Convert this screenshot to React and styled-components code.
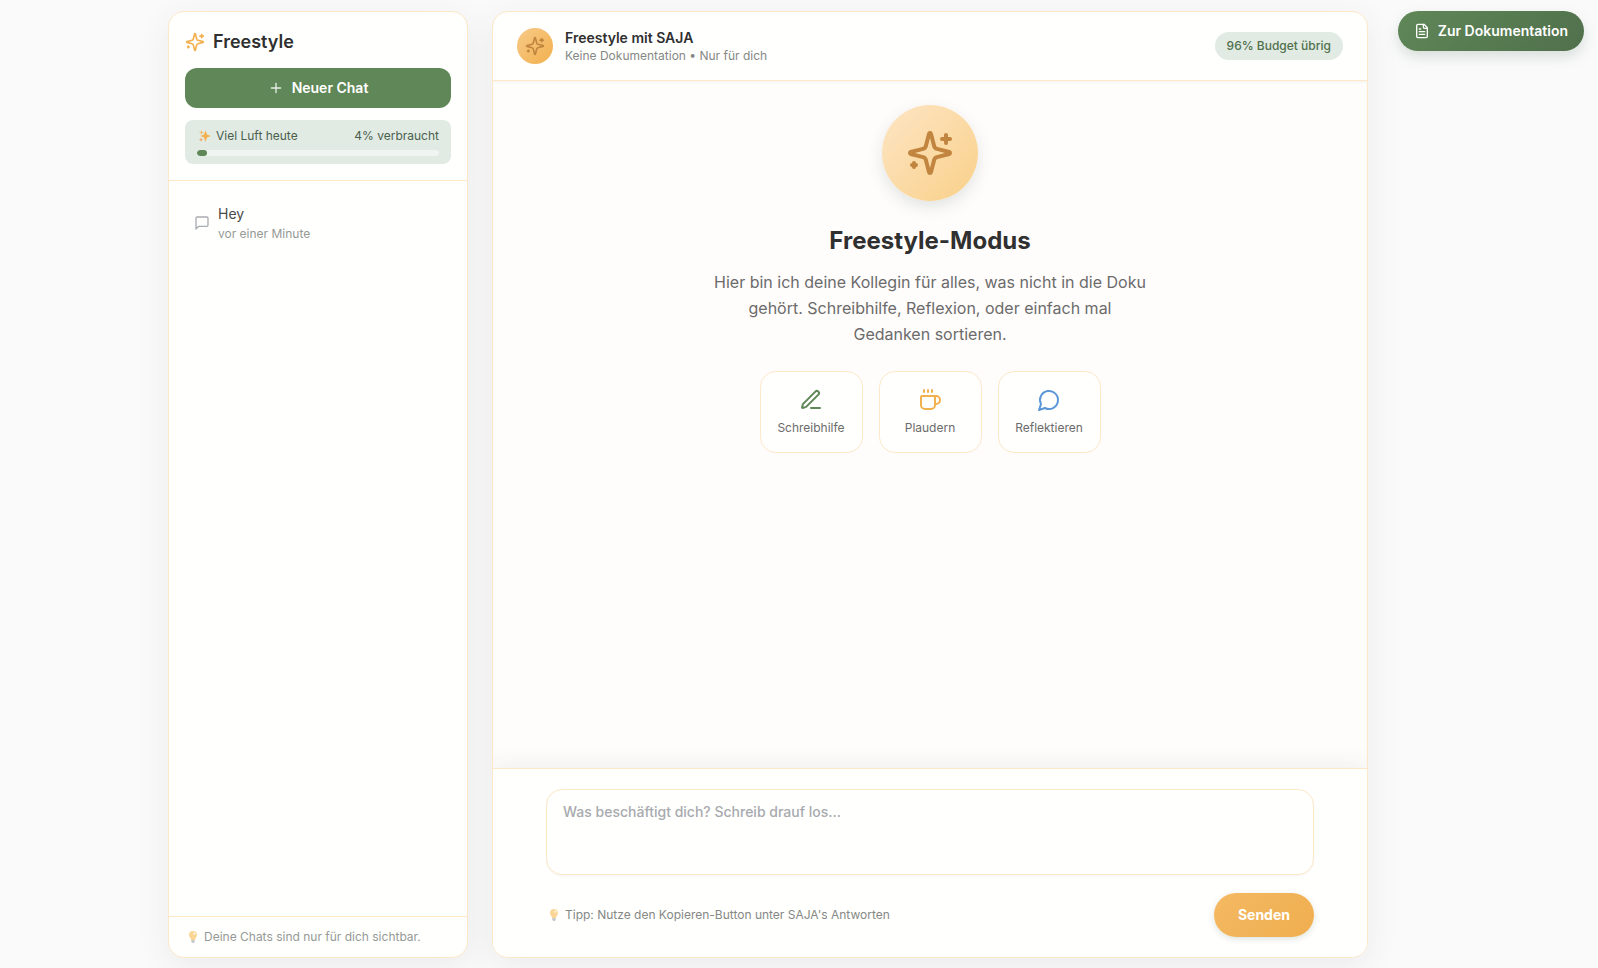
import React, { useState } from 'react';
import styled, { createGlobalStyle } from 'styled-components';
import { Coffee, Plus } from 'lucide-react';

const GlobalStyle = createGlobalStyle`
  *, *::before, *::after {
    box-sizing: border-box;
  }

  body {
    margin: 0;
    background: #fafafa;
    color: #303030;
    font-family: 'Inter', sans-serif;
    font-size: 14px;
    line-height: 20px;
  }

  button, textarea {
    font: inherit;
  }

  h1, h2, p {
    margin: 0;
  }
`;

const Page = styled.div`
  position: relative;
  display: flex;
  justify-content: center;
  height: 100vh;
  padding: 11px 62px 10px 0;
  overflow: hidden;
`;

const Layout = styled.div`
  display: grid;
  grid-template-columns: 300px minmax(0, 1fr);
  gap: 24px;
  width: 100%;
  max-width: 1200px;
`;

const Panel = styled.section`
  display: flex;
  flex-direction: column;
  min-height: 0;
  overflow: hidden;
  background: #fffffe;
  border: 1px solid #fde8c8;
  border-radius: 16px;
  box-shadow: 0 8px 32px rgba(45, 60, 50, 0.08);
`;

const SidebarHeader = styled.header`
  display: flex;
  flex-direction: column;
  gap: 12px;
  padding: 16px;
  border-bottom: 1px solid #fde8c8;
`;

const SidebarTitle = styled.h2`
  display: flex;
  align-items: center;
  gap: 8px;
  font-size: 18px;
  font-weight: 600;
  line-height: 28px;

  svg {
    color: #f2b04e;
  }
`;

const NewChatButton = styled.button`
  display: flex;
  align-items: center;
  justify-content: center;
  gap: 8px;
  height: 40px;
  padding: 0 16px;
  border: 0;
  border-radius: 12px;
  background: #5f8757;
  color: #fff;
  font-weight: 600;
  cursor: pointer;

  svg {
    opacity: 0.85;
  }
`;

const BudgetBox = styled.div`
  display: flex;
  flex-direction: column;
  gap: 6px;
  padding: 8px 12px;
  border-radius: 8px;
  background: #e1ebe4;
  color: #4b5f4d;
  font-size: 12px;
  line-height: 16px;
`;

const BudgetRow = styled.div`
  display: flex;
  align-items: center;
  justify-content: space-between;
`;

const EmojiText = styled.p`
  display: flex;
  align-items: center;
  gap: 3px;
`;

const BudgetTrack = styled.div`
  height: 6px;
  overflow: hidden;
  border-radius: 3px;
  background: #f1f5f2;
`;

const BudgetFill = styled.div`
  height: 100%;
  border-radius: 3px;
  background: #5f8757;
`;

const ChatList = styled.ul`
  flex: 1;
  margin: 0;
  padding: 12px;
  overflow-y: auto;
  list-style: none;
`;

const ChatItem = styled.button`
  display: flex;
  align-items: center;
  gap: 8px;
  width: 100%;
  padding: 10px 12px;
  border: 1px solid transparent;
  border-radius: 12px;
  background: transparent;
  text-align: left;
  cursor: pointer;

  svg {
    color: #a9acb0;
  }
`;

const ChatInfo = styled.span`
  display: flex;
  flex-direction: column;
  gap: 2px;
`;

const ChatName = styled.span`
  color: #4a4a4a;
`;

const ChatTime = styled.span`
  color: #959a95;
  font-size: 12px;
  line-height: 16px;
`;

const SidebarFooter = styled.footer`
  padding: 12px 16px;
  border-top: 1px solid #fde8c8;
  color: #959a95;
  font-size: 12px;
  line-height: 16px;
`;

const ChatHeader = styled.header`
  display: flex;
  align-items: center;
  gap: 12px;
  padding: 16px 24px;
  border-bottom: 1px solid #fde8c8;
`;

const Badge = styled.div`
  display: flex;
  align-items: center;
  justify-content: center;
  flex-shrink: 0;
  width: ${(props) => props.$size}px;
  height: ${(props) => props.$size}px;
  border-radius: 50%;
  color: #c1853f;
`;

const Avatar = styled(Badge)`
  background: linear-gradient(135deg, #f7ca88, #f2b04e);
`;

const HeroBadge = styled(Badge)`
  background: linear-gradient(135deg, #fde5c4, #f9d089);
  box-shadow: 0 6px 16px rgba(45, 80, 60, 0.14);
`;

const HeaderText = styled.div`
  flex: 1;
`;

const HeaderTitle = styled.h1`
  font-size: 14px;
  font-weight: 600;
  line-height: 20px;
`;

const HeaderSubtitle = styled.p`
  color: #858885;
  font-size: 12px;
  line-height: 16px;
`;

const BudgetPill = styled.span`
  padding: 6px 12px;
  border-radius: 14px;
  background: #e1ebe4;
  color: #50704c;
  font-size: 12px;
  font-weight: 500;
  line-height: 16px;
`;

const Conversation = styled.div`
  display: flex;
  flex: 1;
  flex-direction: column;
  align-items: center;
  gap: 24px;
  min-height: 0;
  padding: 24px;
  overflow-y: auto;
  background: #fffdfc;
  box-shadow: inset 0 2px 2px rgba(45, 60, 50, 0.03);
`;

const Intro = styled.div`
  display: flex;
  flex-direction: column;
  gap: 12px;
  max-width: 440px;
  text-align: center;
`;

const IntroTitle = styled.h2`
  font-size: 24px;
  font-weight: 700;
  line-height: 32px;
`;

const IntroText = styled.p`
  color: #6b6b6b;
  font-size: 16px;
  line-height: 26px;
`;

const Modes = styled.div`
  display: grid;
  grid-template-columns: repeat(3, 103px);
  gap: 16px;
`;

const ModeCard = styled.button`
  display: flex;
  flex-direction: column;
  align-items: center;
  gap: 8px;
  padding: 16px 0;
  border: 1px solid #fde8c8;
  border-radius: 16px;
  background: #fffffe;
  color: #6b6b6b;
  font-size: 12px;
  line-height: 16px;
  cursor: pointer;

  svg {
    color: ${(props) => props.$accent};
  }
`;

const Composer = styled.form`
  position: relative;
  padding: 20px 24px;
  border-top: 1px solid #fde8c8;
  background: #fffffe;
  box-shadow: 0 -4px 20px rgba(45, 50, 60, 0.07);
`;

const ComposerInner = styled.div`
  display: flex;
  flex-direction: column;
  gap: 18px;
  max-width: 768px;
  margin: 0 auto;
`;

const MessageInput = styled.textarea`
  display: block;
  width: 100%;
  padding: 12px 16px;
  border: 1px solid #fde8c8;
  border-radius: 16px;
  background: #fffffe;
  color: #303030;
  font-weight: 500;
  line-height: 20px;
  resize: none;
  outline: none;
  box-shadow: 0 1px 2px rgba(45, 60, 50, 0.05);

  &::placeholder {
    color: #a8aaaf;
    opacity: 1;
  }
`;

const ComposerActions = styled.div`
  display: flex;
  align-items: center;
  justify-content: space-between;
`;

const Tip = styled(EmojiText)`
  color: #858885;
  font-size: 12px;
  line-height: 16px;
`;

const SendButton = styled.button`
  padding: 12px 24px;
  border: 0;
  border-radius: 22px;
  background: linear-gradient(135deg, #f4b963, #efae4f);
  color: #fff;
  font-weight: 700;
  line-height: 20px;
  box-shadow: 0 2px 6px rgba(45, 80, 60, 0.16);
  cursor: pointer;
`;

// floats above the page in the top right corner
const DocsLink = styled.a`
  position: absolute;
  top: 11px;
  right: 14px;
  display: flex;
  align-items: center;
  gap: 8px;
  height: 40px;
  padding: 0 16px;
  border-radius: 20px;
  background: linear-gradient(135deg, #5f8757, #50704c);
  color: #fff;
  font-weight: 600;
  text-decoration: none;
  box-shadow: 0 6px 14px rgba(60, 100, 75, 0.18);
`;

const LineIcon = ({ size = 24, children }) => (
  <svg
    width={size}
    height={size}
    viewBox="0 0 24 24"
    fill="none"
    stroke="currentColor"
    strokeWidth="2"
    strokeLinecap="round"
    strokeLinejoin="round"
    aria-hidden="true"
  >
    {children}
  </svg>
);

const SparklesIcon = ({ size }) => (
  <LineIcon size={size}>
    <path d="M9.937 15.5A2 2 0 0 0 8.5 14.063l-6.135-1.582a.5.5 0 0 1 0-.962L8.5 9.936A2 2 0 0 0 9.937 8.5l1.582-6.135a.5.5 0 0 1 .963 0L14.063 8.5A2 2 0 0 0 15.5 9.937l6.135 1.581a.5.5 0 0 1 0 .964L15.5 14.063a2 2 0 0 0-1.437 1.437l-1.582 6.135a.5.5 0 0 1-.963 0z" />
    <path d="M20 3v4" />
    <path d="M22 5h-4" />
    <path d="M4 17v2" />
    <path d="M5 18H3" />
  </LineIcon>
);

const PenIcon = () => (
  <LineIcon>
    <path d="M12 20h9" />
    <path d="M16.376 3.622a1 1 0 0 1 3.002 3.002L7.368 18.635a2 2 0 0 1-.855.506l-2.872.838a.5.5 0 0 1-.62-.62l.838-2.872a2 2 0 0 1 .506-.854z" />
  </LineIcon>
);

const BubbleIcon = () => (
  <LineIcon>
    <path d="M7.9 20A9 9 0 1 0 4 16.1L2 22Z" />
  </LineIcon>
);

const ChatIcon = () => (
  <LineIcon size={16}>
    <path d="M21 15a2 2 0 0 1-2 2H7l-4 4V5a2 2 0 0 1 2-2h14a2 2 0 0 1 2 2z" />
  </LineIcon>
);

const DocIcon = () => (
  <LineIcon size={16}>
    <path d="M15 2H6a2 2 0 0 0-2 2v16a2 2 0 0 0 2 2h12a2 2 0 0 0 2-2V7Z" />
    <path d="M14 2v4a2 2 0 0 0 2 2h4" />
    <path d="M10 9H8" />
    <path d="M16 13H8" />
    <path d="M16 17H8" />
  </LineIcon>
);

const BulbIcon = () => (
  <svg width="16" height="16" viewBox="0 0 16 16" aria-hidden="true">
    <path d="M8 2a4 4 0 0 0-4 4c0 2 1.700 2.800 2.200 5h3.600C10.300 8.800 12 8 12 6a4 4 0 0 0-4-4z" fill="#fbd595" />
    <circle cx="9.500" cy="4.500" r="1.200" fill="#fff3dc" />
    <path d="M6.300 11h3.400v2L8.700 14H7.300l-1-1z" fill="#c6c8ca" />
  </svg>
);

const SparkleEmoji = () => (
  <svg width="16" height="16" viewBox="0 0 16 16" aria-hidden="true">
    <path d="M8.500 2.500l1.500 4L14 8l-4 1.500-1.500 4.500L7 9.500 3.500 8 7 6.500z" fill="#f2b04e" />
    <path d="M4.500 2l.7 1.800 1.800.7-1.800.7L4.500 7l-.7-1.800L2 4.500l1.800-.7z" fill="#f4bd72" />
    <path d="M4 9.500l.6 1.600 1.600.6-1.600.6L4 14l-.6-1.700-1.600-.6 1.600-.6z" fill="#f0a66a" />
  </svg>
);

const chats = [{ id: 1, name: 'Hey', time: 'vor einer Minute' }];

const modes = [
  { label: 'Schreibhilfe', accent: '#5f8757', icon: <PenIcon /> },
  { label: 'Plaudern', accent: '#f2b04e', icon: <Coffee size={24} /> },
  { label: 'Reflektieren', accent: '#5b97d8', icon: <BubbleIcon /> },
];

const usedBudget = 4;

const App = () => {
  const [message, setMessage] = useState('');

  return (
    <>
      <GlobalStyle />
      <Page>
        <Layout>
          <Panel as="aside">
            <SidebarHeader>
              <SidebarTitle>
                <SparklesIcon size={20} />
                Freestyle
              </SidebarTitle>
              <NewChatButton type="button">
                <Plus size={16} />
                Neuer Chat
              </NewChatButton>
              <BudgetBox>
                <BudgetRow>
                  <EmojiText>
                    <SparkleEmoji />
                    Viel Luft heute
                  </EmojiText>
                  <span>{usedBudget}% verbraucht</span>
                </BudgetRow>
                <BudgetTrack>
                  <BudgetFill style={{ width: `${usedBudget}%` }} />
                </BudgetTrack>
              </BudgetBox>
            </SidebarHeader>
            <ChatList>
              {chats.map((chat) => (
                <li key={chat.id}>
                  <ChatItem type="button">
                    <ChatIcon />
                    <ChatInfo>
                      <ChatName>{chat.name}</ChatName>
                      <ChatTime>{chat.time}</ChatTime>
                    </ChatInfo>
                  </ChatItem>
                </li>
              ))}
            </ChatList>
            <SidebarFooter>
              <EmojiText>
                <BulbIcon />
                Deine Chats sind nur für dich sichtbar.
              </EmojiText>
            </SidebarFooter>
          </Panel>

          <Panel as="main">
            <ChatHeader>
              <Avatar $size={36}>
                <SparklesIcon size={20} />
              </Avatar>
              <HeaderText>
                <HeaderTitle>Freestyle mit SAJA</HeaderTitle>
                <HeaderSubtitle>Keine Dokumentation • Nur für dich</HeaderSubtitle>
              </HeaderText>
              <BudgetPill>{100 - usedBudget}% Budget übrig</BudgetPill>
            </ChatHeader>

            <Conversation>
              <HeroBadge $size={96}>
                <SparklesIcon size={48} />
              </HeroBadge>
              <Intro>
                <IntroTitle>Freestyle-Modus</IntroTitle>
                <IntroText>
                  Hier bin ich deine Kollegin für alles, was nicht in die Doku gehört.
                  Schreibhilfe, Reflexion, oder einfach mal Gedanken sortieren.
                </IntroText>
              </Intro>
              <Modes>
                {modes.map((mode) => (
                  <ModeCard key={mode.label} type="button" $accent={mode.accent}>
                    {mode.icon}
                    {mode.label}
                  </ModeCard>
                ))}
              </Modes>
            </Conversation>

            <Composer onSubmit={(e) => e.preventDefault()}>
              <ComposerInner>
                <MessageInput
                  rows={3}
                  aria-label="Nachricht"
                  placeholder="Was beschäftigt dich? Schreib drauf los..."
                  value={message}
                  onChange={(e) => setMessage(e.target.value)}
                />
                <ComposerActions>
                  <Tip>
                    <BulbIcon />
                    Tipp: Nutze den Kopieren-Button unter SAJA's Antworten
                  </Tip>
                  <SendButton type="submit">Senden</SendButton>
                </ComposerActions>
              </ComposerInner>
            </Composer>
          </Panel>
        </Layout>
        <DocsLink href="#dokumentation">
          <DocIcon />
          Zur Dokumentation
        </DocsLink>
      </Page>
    </>
  );
};

export default App;
